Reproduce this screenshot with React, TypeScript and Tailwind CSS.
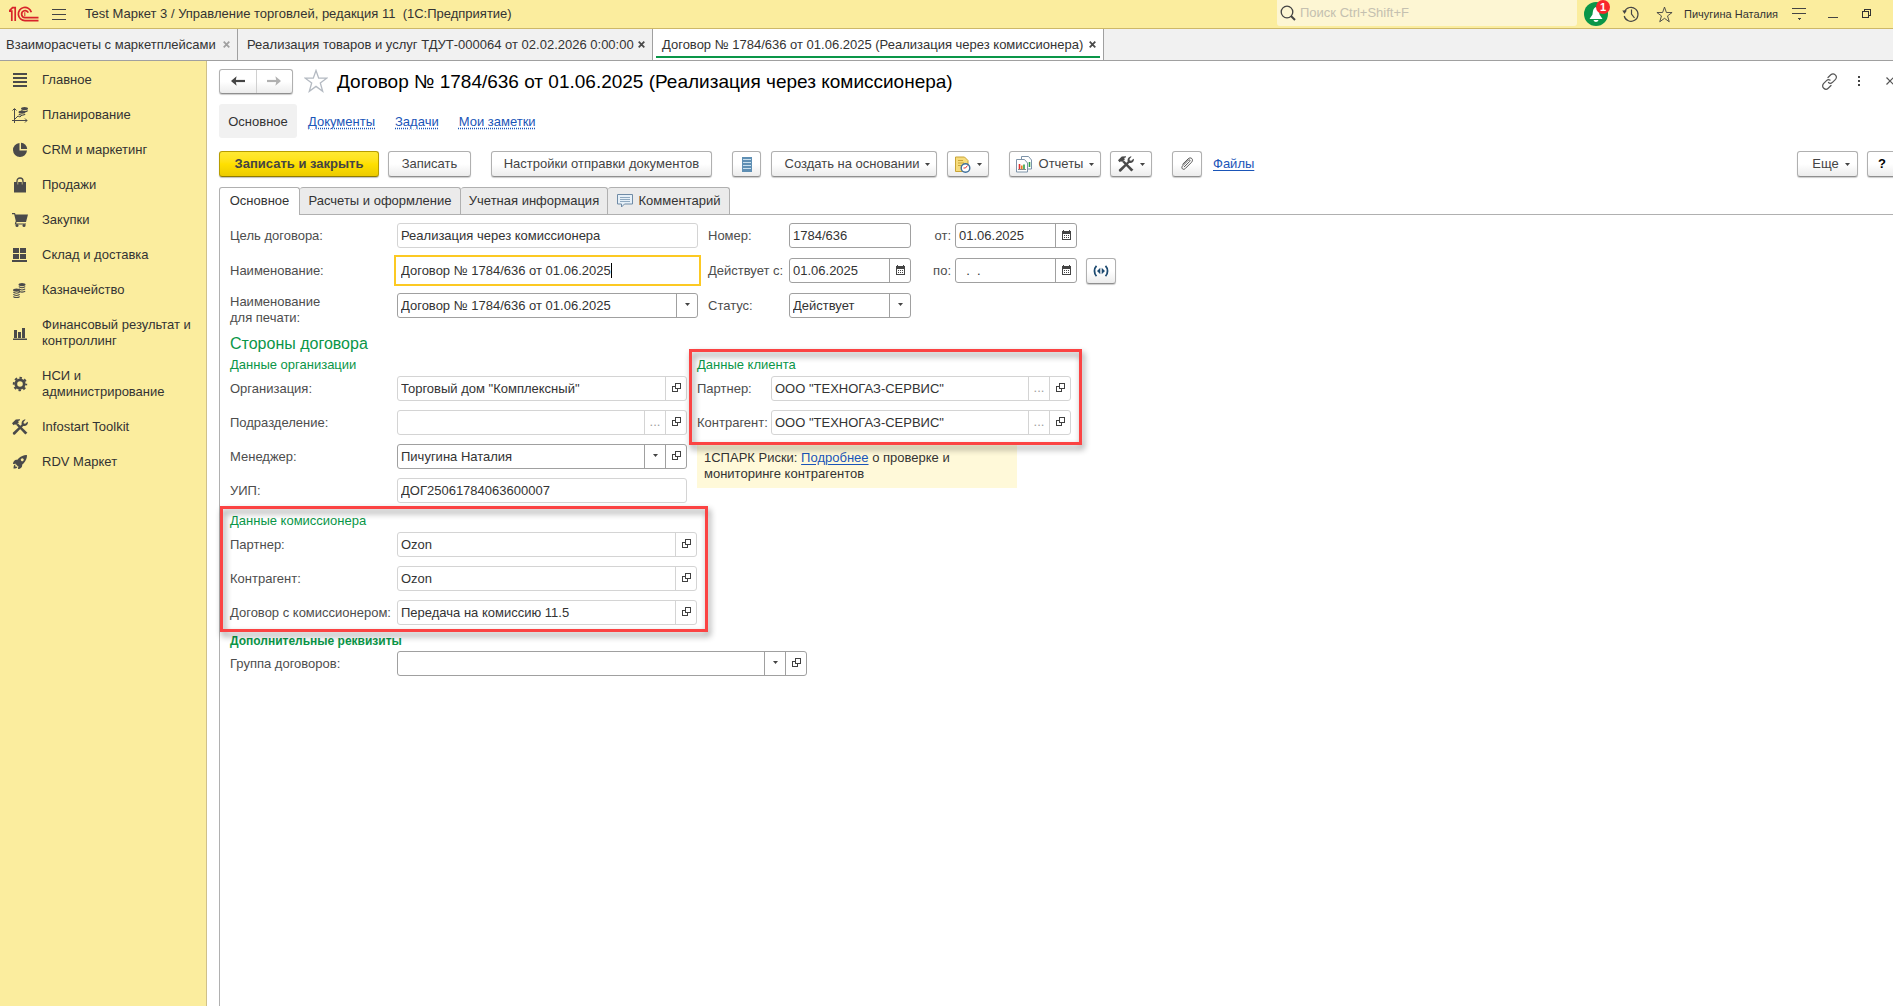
import type { ReactNode } from "react";
import clsx from "clsx";
import { IoRocketSharp } from "react-icons/io5";

/* ---------- icons ---------- */

function Logo() {
  return (
    <svg width="30" height="16" viewBox="0 0 30 16" fill="none" stroke="#d8232a" strokeWidth="1.7">
      <path d="M0 5.2h2.8V15M0 5.2 3.6 1.6h2.6V15" />
      <path d="M22.3 6.2A6.6 6.6 0 1 0 16 14.6h13.5" />
      <path d="M19.3 6.6a3.5 3.5 0 1 0-3.3 5h13.5" />
      <path d="M15.8 6.2v4" strokeWidth="1" />
    </svg>
  );
}

function StarIcon({ size, color }: { size: number; color: string }) {
  return (
    <svg width={size} height={size} viewBox="0 0 24 24" fill="none" stroke={color} strokeWidth="1.3">
      <path d="m12 1.5 2.7 7.7h8L16.3 14l2.4 8.3L12 17.4l-6.7 4.9L7.7 14 1.3 9.2h8z" />
    </svg>
  );
}

function ToolsIcon({ size = 16 }: { size?: number }) {
  return (
    <svg width={size} height={size} viewBox="0 0 16 16" fill="#4a4a4a">
      <path d="M4.3 5.9 13.3 15.6 15.4 13.8 6 4.6z" />
      <path d="M0 4.2 3.8.6 8 .3v.9L6.200 2l.6 1.500-2.600 2.600-1.200-.9-1.400 1.100z" />
      <path d="M1 13.600 9.700 5.600c-.6-2.300.6-4.600 3.300-5.300l.5.500-2 2.100.3 1.500 1.500.4 2.100-2.100.5.6c.1 2.700-2.200 4.300-4.700 3.600L3 15.600c-1.200.8-2.800-.8-2-2z" />
    </svg>
  );
}

function OpenIcon() {
  return (
    <svg width="9" height="9" viewBox="0 0 9 9" fill="none" stroke="#404040" shapeRendering="crispEdges">
      <path d="M3.500.5h5v5h-5zM3 3.500H.5v5h5V6" />
    </svg>
  );
}

function CalendarIcon() {
  return (
    <svg width="9" height="10" viewBox="0 0 9 10" fill="#444" shapeRendering="crispEdges">
      <path d="M1 0h1v1h5V0h1v1h1v9H0V1h1zM1 4v5h7V4z" fillRule="evenodd" />
      <path d="M2 5h1v1H2zM4 5h1v1H4zM6 5h1v1H6zM2 7h1v1H2zM4 7h1v1H4zM6 7h1v1H6z" />
    </svg>
  );
}

function Caret() {
  return (
    <svg width="5" height="3" viewBox="0 0 5 3" fill="#444">
      <path d="M0 0h5L2.500 3z" />
    </svg>
  );
}

function CloseIcon({ color = "#555", size = 7 }: { color?: string; size?: number }) {
  return (
    <svg width={size} height={size} viewBox="0 0 8 8" stroke={color} strokeWidth="2">
      <path d="m.8.8 6.400 6.400M7.200.8.8 7.200" />
    </svg>
  );
}

function Arrow({ back, color }: { back?: boolean; color: string }) {
  return (
    <svg width="14" height="10" viewBox="0 0 14 10" className={clsx(!back && "rotate-180")}>
      <path d="M1.500 5H14" stroke={color} strokeWidth="2.200" />
      <path d="M0 5 5.600.3 4.600 5l1 4.700z" fill={color} />
    </svg>
  );
}

function ClipIcon() {
  return (
    <svg width="14" height="14" viewBox="0 0 14 14" fill="none" stroke="#555" strokeLinecap="round">
      <path d="m4.300 9.800 5.400-5.400c1-1.100-.3-2.300-1.300-1.300L2.600 8.900c-2 2.200.6 4.700 2.700 2.600l6.200-6.200c2.700-2.900-.8-6-3.400-3.400L2.700 7.200" />
    </svg>
  );
}

function Coins({ x, y, rows }: { x: number; y: number; rows: number }) {
  return (
    <g transform={`translate(${x} ${y})`}>
      <ellipse cx="3.500" cy="1.600" rx="3.500" ry="1.600" fill="#4a4a4a" />
      {Array.from({ length: rows }, (_, i) => (
        <path
          key={i}
          d={`M.4 ${3.6 + i * 2.2}c.7 1.500 5.500 1.500 6.200 0`}
          fill="none"
          stroke="#4a4a4a"
          strokeWidth="1.100"
        />
      ))}
    </g>
  );
}

const dark = "#4a4a4a";

const menu: { label: string; icon: ReactNode }[] = [
  {
    label: "Главное",
    icon: <path d="M1 1h14v2H1zM1 5h14v2H1zM1 9h14v2H1zM1 13h14v2H1z" fill={dark} />,
  },
  {
    label: "Планирование",
    icon: (
      <>
        <path d="M2.500 16V2M.5 3.500l2-2 2 2M0 13.500h15M13 11.500l2 2-2 2M3 12l3-3 2 1 2-2" fill="none" stroke={dark} />
        <Coins x={9} y={0} rows={1} />
        <Coins x={6.5} y={3.5} rows={1} />
      </>
    ),
  },
  {
    label: "CRM и маркетинг",
    icon: (
      <>
        <path d="M7.500 1v7.500H15A7 7 0 1 1 7.500 1z" fill={dark} />
        <path d="M9 .8A6.500 6.500 0 0 1 15.200 7H9z" fill={dark} />
      </>
    ),
  },
  {
    label: "Продажи",
    icon: (
      <>
        <path d="M2 5h12v10.500H2z" fill={dark} />
        <path d="M5 8V4c0-4 6-4 6 0v4" fill="none" stroke={dark} strokeWidth="1.300" />
        <path d="M5.800 5v2.500M10.200 5v2.500" stroke="#fbed9e" strokeWidth=".6" />
      </>
    ),
  },
  {
    label: "Закупки",
    icon: (
      <>
        <path d="M0 1h3l.5 1.500H16L14 10H4L2.200 2.200H0z" fill={dark} />
        <path d="M4 9.500 3.500 12H14" fill="none" stroke={dark} strokeWidth="1.200" />
        <circle cx="5" cy="13.500" r="1.500" fill={dark} />
        <circle cx="12" cy="13.500" r="1.500" fill={dark} />
      </>
    ),
  },
  {
    label: "Склад и доставка",
    icon: <path d="M1 1h6v5H1zM8 1h6v5H8zM1 7h6v5H1zM8 7h6v5H8zM0 13h15v2H0z" fill={dark} />,
  },
  {
    label: "Казначейство",
    icon: (
      <>
        <Coins x={6.5} y={1} rows={3} />
        <Coins x={1} y={6.5} rows={3} />
      </>
    ),
  },
  {
    label: "Финансовый результат и контроллинг",
    icon: <path d="M2 5h3v8H2zM6 7h3v6H6zM10 3h3v10h-3zM1 13.500h14V15H1z" fill={dark} />,
  },
  {
    label: "НСИ и администрирование",
    icon: (
      <>
        <circle cx="8" cy="8" r="4.200" fill="none" stroke={dark} strokeWidth="2.800" />
        <circle cx="8" cy="8" r="6.200" fill="none" stroke={dark} strokeWidth="2" strokeDasharray="2.500 2.370" strokeDashoffset="1.250" />
      </>
    ),
  },
  { label: "Infostart Toolkit", icon: <ToolsIcon /> },
  { label: "RDV Маркет", icon: <IoRocketSharp size={16} color={dark} /> },
];

/* ---------- controls ---------- */

function Button({
  children,
  className,
  label,
}: {
  children: ReactNode;
  className?: string;
  label?: string;
}) {
  return (
    <button
      type="button"
      aria-label={label}
      className={clsx(
        "flex h-[26px] shrink-0 items-center justify-center rounded-[3px] border border-[#b0b0b0] border-b-[#8f8f8f] bg-linear-to-b from-white from-50% to-[#ececec] whitespace-nowrap shadow-[0_1px_1px_rgba(0,0,0,0.2)]",
        className,
      )}
    >
      {children}
    </button>
  );
}

type Part = "drop" | "dots" | "open" | "calendar";

function FieldPart({ part, line }: { part: Part; line: string }) {
  const names = {
    drop: "Выбрать из списка",
    dots: "Выбрать",
    open: "Открыть",
    calendar: "Календарь",
  };
  return (
    <button
      type="button"
      aria-label={names[part]}
      className={clsx("flex w-[21px] shrink-0 items-center justify-center border-l pb-[2px]", line)}
    >
      {part === "drop" && <Caret />}
      {part === "dots" && <span className="text-[#a0a0a0]">...</span>}
      {part === "open" && <OpenIcon />}
      {part === "calendar" && <CalendarIcon />}
    </button>
  );
}

function Field({
  id,
  value,
  parts = [],
  readOnly,
  focused,
  className,
}: {
  id: string;
  value: string;
  parts?: Part[];
  readOnly?: boolean;
  focused?: boolean;
  className: string;
}) {
  const line = readOnly ? "border-[#d4d4d4]" : "border-[#a0a0a0]";
  return (
    <div
      className={clsx(
        "flex h-[25px] shrink-0 border bg-white",
        focused ? "border-transparent outline-2 outline-offset-1 outline-[#fcc923]" : clsx("rounded-[3px]", line),
        className,
      )}
    >
      <input
        id={id}
        defaultValue={value}
        readOnly={readOnly}
        className={clsx(
          "min-w-0 bg-transparent pl-[3px] whitespace-pre text-[#333] outline-none",
          focused ? "field-sizing-content" : "flex-1",
        )}
      />
      {focused && <span className="my-1 w-px bg-black" />}
      {parts.map((part) => (
        <FieldPart key={part} part={part} line={line} />
      ))}
    </div>
  );
}

function Label({
  htmlFor,
  children,
  className = "w-[167px]",
}: {
  htmlFor: string;
  children: ReactNode;
  className?: string;
}) {
  return (
    <label htmlFor={htmlFor} className={clsx("shrink-0 whitespace-nowrap text-[#4d4d4d]", className)}>
      {children}
    </label>
  );
}

// red frame drawn over a group of fields
function Frame({ className }: { className: string }) {
  return (
    <div
      className={clsx(
        "pointer-events-none absolute border-3 border-[#fb4343] drop-shadow-[2px_4px_3px_rgba(0,0,0,0.45)]",
        className,
      )}
    />
  );
}

/* ---------- page parts ---------- */

function TopBar() {
  return (
    <header className="flex h-[29px] items-center border-b border-[#cdb869] bg-[#fbed9e] pl-[9px] text-[#333]">
      <Logo />
      <button type="button" aria-label="Меню" className="ml-[13px]">
        <svg width="14" height="13" viewBox="0 0 14 13" stroke="#444" shapeRendering="crispEdges">
          <path d="M0 1.500h14M0 6.500h14M0 11.500h14" />
        </svg>
      </button>
      <span className="ml-[19px] flex-1 whitespace-pre">
        Test Маркет 3 / Управление торговлей, редакция 11  (1С:Предприятие)
      </span>
      <label className="flex h-[26px] w-[300px] items-center gap-1 self-start rounded-b-[3px] bg-[#fdf6d3] pl-[3px]">
        <svg width="16" height="16" viewBox="0 0 16 16" fill="none" stroke="#444" strokeWidth="1.300">
          <circle cx="7" cy="7" r="5.800" />
          <path d="m11 11 4 4" strokeWidth="2" />
        </svg>
        <input
          placeholder="Поиск Ctrl+Shift+F"
          aria-label="Поиск"
          className="min-w-0 flex-1 bg-transparent outline-none placeholder:text-[#c4c0b0]"
        />
      </label>
      <button type="button" aria-label="Уведомления" className="relative ml-[7px] size-6 rounded-full bg-[#0a9648]">
        <svg width="24" height="24" viewBox="0 0 24 24" fill="#fff">
          <path d="M12 5c3 1 3 4.500 3.500 7.500L18.500 17h-13l3-4.500C9 9.500 9 6 12 5zM9.500 18h5c-.5 2.500-4.500 2.500-5 0z" />
        </svg>
        <span className="absolute -top-0.5 -right-0.5 size-[14px] rounded-full bg-[#f8262b] text-center text-[11px] leading-[14px] font-bold text-white">
          1
        </span>
      </button>
      <button type="button" aria-label="История" className="ml-[14px]">
        <svg width="18" height="18" viewBox="0 0 18 18" fill="none" stroke="#444" strokeWidth="1.200">
          <path d="M2.600 6.500A7 7 0 1 1 2.200 11M9.500 4.500V9l3 4" />
          <path d="M.3 5.500h4.500L2.500 9z" fill="#444" stroke="none" />
        </svg>
      </button>
      <button type="button" aria-label="Избранное" className="ml-4">
        <StarIcon size={17} color="#444" />
      </button>
      <span className="ml-[11px] w-[108px] text-[11px] whitespace-nowrap">Пичугина Наталия</span>
      <button type="button" aria-label="Настройки">
        <svg width="14" height="14" viewBox="0 0 14 14" stroke="#444" shapeRendering="crispEdges">
          <path d="M0 1.500h14M0 6.500h14" />
          <path d="M4.500 10.500h5L7 13z" fill="#444" stroke="none" />
        </svg>
      </button>
      <button type="button" aria-label="Свернуть" className="ml-[22px]">
        <svg width="10" height="10" viewBox="0 0 10 10" stroke="#444" shapeRendering="crispEdges">
          <path d="M0 8.500h10" />
        </svg>
      </button>
      <button type="button" aria-label="Восстановить" className="mr-[21px] ml-6">
        <svg width="10" height="10" viewBox="0 0 10 10" fill="none" stroke="#333" shapeRendering="crispEdges">
          <path d="M.5 2.500h6v6h-6zM2.500 2V.5h6v6H7" />
        </svg>
      </button>
    </header>
  );
}

function WindowTabs() {
  const tabs = [
    { title: "Взаиморасчеты с маркетплейсами", muted: true, className: "w-[238px] pl-[6px]" },
    { title: "Реализация товаров и услуг ТДУТ-000064 от 02.02.2026 0:00:00", className: "w-[415px] pl-[9px]" },
    {
      title: "Договор № 1784/636 от 01.06.2025 (Реализация через комиссионера)",
      active: true,
      className: "w-[451px] pl-[9px]",
    },
  ];
  return (
    <nav className="flex h-8 border-b border-[#a0a0a0] bg-[#f1f1f1] text-[#333]">
      {tabs.map((tab) => (
        <div
          key={tab.title}
          className={clsx(
            "relative flex items-center justify-between border-r border-[#a0a0a0] pr-[7px] whitespace-nowrap",
            tab.className,
            tab.active && "bg-white",
          )}
        >
          <a href="#">{tab.title}</a>
          <button type="button" aria-label="Закрыть">
            <CloseIcon color={tab.muted ? "#a0a0a0" : "#4a4a4a"} />
          </button>
          {tab.active && <span className="absolute inset-x-[3px] bottom-[2px] h-[2px] bg-[#0a9648]" />}
        </div>
      ))}
    </nav>
  );
}

function Sidebar() {
  return (
    <aside className="w-[207px] shrink-0 border-r border-[#cfc08a] bg-[#fbed9e] pt-[2px]">
      {menu.map((item) => (
        <a key={item.label} href="#" className="flex items-center gap-[14px] pt-[9px] pr-3 pb-[10px] pl-3 text-[#333]">
          <svg width="16" height="16" viewBox="0 0 16 16" className="shrink-0">
            {item.icon}
          </svg>
          <span>{item.label}</span>
        </a>
      ))}
    </aside>
  );
}

function TitleRow() {
  return (
    <div className="flex h-6 items-center">
      <div className="flex h-[25px] w-[74px] rounded-[3px] border border-[#b0b0b0] border-b-[#8f8f8f] bg-linear-to-b from-white from-50% to-[#ececec] shadow-[0_1px_1px_rgba(0,0,0,0.2)]">
        <button type="button" aria-label="Назад" className="flex flex-1 items-center justify-center border-r border-[#d0d0d0]">
          <Arrow back color="#444" />
        </button>
        <button type="button" aria-label="Вперед" className="flex flex-1 items-center justify-center">
          <Arrow color="#b0b0b0" />
        </button>
      </div>
      <button type="button" aria-label="В избранное" className="ml-[11px]">
        <StarIcon size={24} color="#b4bac2" />
      </button>
      <h1 className="ml-[9px] flex-1 pt-[2px] text-[19px] leading-6 whitespace-nowrap text-black">
        Договор № 1784/636 от 01.06.2025 (Реализация через комиссионера)
      </h1>
      <button type="button" aria-label="Ссылка">
        <svg width="17" height="17" viewBox="0 0 17 17" fill="none" stroke="#555" strokeWidth="1.200" strokeLinecap="round">
          <path d="M7 4.500 9.800 1.800c3-2.700 7.300 1.300 4.700 4.500l-3 3c-1.300 1.200-3 1.200-4 .2M10 12.500l-2.800 2.700C4.200 18 0 14 2.500 10.700l3-3c1-1 2.400-1.200 3.500-.6" />
        </svg>
      </button>
      <button type="button" aria-label="Еще" className="ml-5 grid gap-[2px]">
        <span className="size-[2px] bg-[#444]" />
        <span className="size-[2px] bg-[#444]" />
        <span className="size-[2px] bg-[#444]" />
      </button>
      <button type="button" aria-label="Закрыть" className="-mr-px ml-[26px]">
        <svg width="8" height="8" viewBox="0 0 8 8" stroke="#555" strokeWidth="1.200">
          <path d="m.5.5 7 7M7.500.5l-7 7" />
        </svg>
      </button>
    </div>
  );
}

function Toolbar() {
  return (
    <div className="mt-[13px] flex items-center">
      <button
        type="button"
        className="h-[26px] w-[160px] rounded-[3px] border border-[#b79d00] border-b-[#8f7b00] bg-linear-to-b from-[#ffe933] via-[#ffe000] to-[#eccb00] font-bold text-[#444] shadow-[0_1px_1px_rgba(0,0,0,0.25)]"
      >
        Записать и закрыть
      </button>
      <Button className="ml-[9px] w-[83px]">Записать</Button>
      <Button className="ml-5 w-[221px]">Настройки отправки документов</Button>
      <Button label="Список" className="ml-5 w-[29px]">
        <svg width="10" height="15" viewBox="0 0 10 15" shapeRendering="crispEdges">
          <path d="M0 0h10v15H0z" fill="#5f8fb4" />
          <path d="M1 2h8v1H1zM1 5h8v1H1zM1 8h8v1H1zM1 11h8v1H1z" fill="#c9dfee" />
        </svg>
      </Button>
      <Button className="ml-[10px] w-[166px] gap-[6px] pl-[7px]">
        Создать на основании <Caret />
      </Button>
      <Button label="Напоминание" className="ml-[10px] w-[42px] gap-[6px]">
        <svg width="17" height="17" viewBox="0 0 17 17">
          <path d="M1.500 1h9L14 4.500v11H1.500z" fill="#f7dc7c" stroke="#c9a437" />
          <path d="M4 4.500h5M4 7h6M4 9.500h4" stroke="#c9a437" />
          <circle cx="11.500" cy="12" r="4.300" fill="#fff" stroke="#3d6f9e" strokeWidth="1.400" />
          <path d="m11.500 12 2-2.500M9.500 12h2" stroke="#e03030" />
        </svg>
        <Caret />
      </Button>
      <Button className="ml-5 w-[92px] gap-[6px]">
        <svg width="17" height="17" viewBox="0 0 17 17" fill="#fff" stroke="#7d93a8">
          <path d="M5.500.5h7L15.500 4v9h-10z" />
          <path d="M13.500 6v5" stroke="#2ca04a" strokeWidth="1.600" />
          <path d="M.5 3.500h8L11.500 7v9H.5z" />
          <path d="M3.500 8v5" stroke="#e03030" strokeWidth="1.600" />
          <path d="M5.800 9.500V13" stroke="#f08020" strokeWidth="1.600" />
          <path d="M8 8.500V13" stroke="#2ca04a" strokeWidth="1.600" />
          <path d="M2 13.500h8" stroke="#888" />
        </svg>
        Отчеты <Caret />
      </Button>
      <Button label="Инструменты" className="ml-[9px] w-[42px] gap-[6px]">
        <ToolsIcon />
        <Caret />
      </Button>
      <Button label="Прикрепить" className="ml-5 w-[30px]">
        <ClipIcon />
      </Button>
      <a href="#" className="ml-[11px] text-[#1a55b8] underline underline-offset-2">
        Файлы
      </a>
      <Button className="ml-auto w-[61px] gap-[6px] pl-[7px]">
        Еще <Caret />
      </Button>
      <Button label="Справка" className="-mr-1 ml-[9px] w-[30px] font-bold text-black">
        ?
      </Button>
    </div>
  );
}

function SectionTabs() {
  const base =
    "flex h-7 items-center justify-center rounded-t-[3px] border-t border-r border-[#b0b0b0] bg-[#ebebeb] pb-[2px]";
  return (
    <div className="mt-[10px] -mb-px flex text-[#333]">
      <button
        type="button"
        className="relative flex h-7 w-[81px] items-center justify-center rounded-t-[3px] border-x border-t border-[#b0b0b0] bg-white pb-[2px]"
      >
        Основное
      </button>
      <button type="button" className={clsx(base, "w-[161px]")}>
        Расчеты и оформление
      </button>
      <button type="button" className={clsx(base, "w-[147px]")}>
        Учетная информация
      </button>
      <button type="button" className={clsx(base, "w-[122px] gap-[6px]")}>
        <svg width="16" height="14" viewBox="0 0 16 14" fill="#e6f0f8" stroke="#6f8ba6">
          <path d="M.5.500h15v9.500H7.500L4.500 13v-3h-4z" />
          <path d="M3 3.500h10M3 5.500h10M3 7.500h10" stroke="#8fa9c0" />
        </svg>
        Комментарий
      </button>
    </div>
  );
}

function MainRows() {
  return (
    <div className="grid gap-[10px]">
      <div className="flex items-center">
        <Label htmlFor="purpose">Цель договора:</Label>
        <Field id="purpose" value="Реализация через комиссионера" readOnly className="w-[301px]" />
        <Label htmlFor="number" className="ml-[10px] w-[81px]">
          Номер:
        </Label>
        <Field id="number" value="1784/636" className="w-[122px]" />
        <Label htmlFor="date" className="w-11 pr-1 text-right">
          от:
        </Label>
        <Field id="date" value="01.06.2025" parts={["calendar"]} className="w-[122px]" />
      </div>
      <div className="flex items-center">
        <Label htmlFor="name">Наименование:</Label>
        <Field id="name" value="Договор № 1784/636 от 01.06.2025" focused className="w-[301px]" />
        <Label htmlFor="from" className="ml-[10px] w-[81px]">
          Действует с:
        </Label>
        <Field id="from" value="01.06.2025" parts={["calendar"]} className="w-[122px]" />
        <Label htmlFor="to" className="w-11 pr-1 text-right">
          по:
        </Label>
        <Field id="to" value="  .  ." parts={["calendar"]} className="w-[122px]" />
        <Button label="Период" className="-my-px ml-[9px] w-[30px]">
          <svg width="16" height="12" viewBox="0 0 16 12" fill="none" stroke="#1d4a70" strokeWidth="1.800">
            <path d="M3.500.8C.8 3.500.8 8.500 3.500 11.200M12.500.8c2.700 2.700 2.700 7.700 0 10.400" />
            <path d="M7.300 2.800v6.400L4 6zM8.700 2.800v6.400L12 6z" fill="#1d4a70" stroke="none" />
          </svg>
        </Button>
      </div>
      <div className="flex h-[25px] items-start">
        <Label htmlFor="print" className="w-[167px] pt-px">
          Наименование
          <br />
          для печати:
        </Label>
        <Field id="print" value="Договор № 1784/636 от 01.06.2025" parts={["drop"]} className="w-[301px]" />
        <Label htmlFor="status" className="ml-[10px] w-[81px] self-center">
          Статус:
        </Label>
        <div className="relative w-[122px]">
          <select
            id="status"
            className="h-[25px] w-full appearance-none rounded-[3px] border border-[#a0a0a0] bg-white pl-[3px] text-[#333]"
          >
            <option>Действует</option>
          </select>
          <span className="pointer-events-none absolute inset-y-px right-px flex w-[21px] items-center justify-center border-l border-[#a0a0a0] pb-[2px]">
            <Caret />
          </span>
        </div>
      </div>
    </div>
  );
}

function Row({ label, labelClass, ...field }: { label: string; labelClass?: string } & Parameters<typeof Field>[0]) {
  return (
    <div className="flex items-center">
      <Label htmlFor={field.id} className={labelClass}>
        {label}
      </Label>
      <Field {...field} />
    </div>
  );
}

function Form() {
  return (
    <form className="flex-1 border-t border-l border-[#b0b0b0] pt-2 pl-[10px]">
      <MainRows />
      <h2 className="mt-4 text-[16px] leading-5 text-[#0a9648]">Стороны договора</h2>
      <div className="flex items-start">
        <div className="w-[467px] shrink-0">
          <h3 className="mt-[3px] mb-[3px] text-[#0a9648]">Данные организации</h3>
          <div className="grid gap-[9px]">
            <Row label="Организация:" id="org" value={'Торговый дом "Комплексный"'} parts={["open"]} readOnly className="w-[290px]" />
            <Row label="Подразделение:" id="dep" value="" parts={["dots", "open"]} readOnly className="w-[290px]" />
            <Row label="Менеджер:" id="manager" value="Пичугина Наталия" parts={["drop", "open"]} className="w-[290px]" />
            <Row label="УИП:" id="uip" value="ДОГ25061784063600007" readOnly className="w-[290px]" />
          </div>
        </div>
        <div>
          <section className="relative">
            <h3 className="mt-[3px] mb-[3px] text-[#0a9648]">Данные клиента</h3>
            <div className="grid gap-[9px]">
              <Row
                label="Партнер:"
                labelClass="w-[74px]"
                id="client"
                value={'ООО "ТЕХНОГАЗ-СЕРВИС"'}
                parts={["dots", "open"]}
                readOnly
                className="w-[300px]"
              />
              <Row
                label="Контрагент:"
                labelClass="w-[74px]"
                id="clientOrg"
                value={'ООО "ТЕХНОГАЗ-СЕРВИС"'}
                parts={["dots", "open"]}
                readOnly
                className="w-[300px]"
              />
            </div>
            <Frame className="-top-2 -right-[11px] -bottom-[10px] -left-2" />
          </section>
          <p className="mt-[9px] w-[320px] bg-[#fff9d9] px-[7px] py-[6px] text-[#333]">
            1СПАРК Риски:{" "}
            <a href="#" className="text-[#1a55b8] underline underline-offset-2">
              Подробнее
            </a>{" "}
            о проверке и
            <br />
            мониторинге контрагентов
          </p>
        </div>
      </div>
      <section className="relative mt-[10px] w-[467px]">
        <h3 className="mb-[3px] text-[#0a9648]">Данные комиссионера</h3>
        <div className="grid gap-[9px]">
          <Row label="Партнер:" id="agent" value="Ozon" parts={["open"]} readOnly className="w-[300px]" />
          <Row label="Контрагент:" id="agentOrg" value="Ozon" parts={["open"]} readOnly className="w-[300px]" />
          <Row
            label="Договор с комиссионером:"
            id="agentContract"
            value="Передача на комиссию 11.5"
            parts={["open"]}
            readOnly
            className="w-[300px]"
          />
        </div>
        <Frame className="-top-[7px] -right-[11px] -bottom-[7px] -left-[10px]" />
      </section>
      <h3 className="mt-2 mb-[2px] text-[12px] font-bold text-[#0a9648]">Дополнительные реквизиты</h3>
      <Row label="Группа договоров:" id="group" value="" parts={["drop", "open"]} className="w-[410px]" />
    </form>
  );
}

export default function App() {
  const links = ["Документы", "Задачи", "Мои заметки"];
  return (
    <div className="flex min-h-screen flex-col overflow-hidden bg-white font-['Liberation_Sans',Arial,sans-serif] text-[13px] leading-4 text-[#444]">
      <TopBar />
      <WindowTabs />
      <div className="flex flex-1">
        <Sidebar />
        <main className="flex min-w-0 flex-1 flex-col pt-2 pl-3">
          <TitleRow />
          <nav className="mt-[11px] flex h-[34px] items-center">
            <a href="#" className="flex h-full w-[78px] items-center justify-center rounded-[3px] bg-[#f1f1f1] pt-px text-[#333]">
              Основное
            </a>
            <div className="ml-[11px] flex gap-5 pt-px">
              {links.map((link) => (
                <a key={link} href="#" className="text-[#1a55b8] underline decoration-dotted underline-offset-2">
                  {link}
                </a>
              ))}
            </div>
          </nav>
          <Toolbar />
          <SectionTabs />
          <Form />
        </main>
      </div>
    </div>
  );
}
